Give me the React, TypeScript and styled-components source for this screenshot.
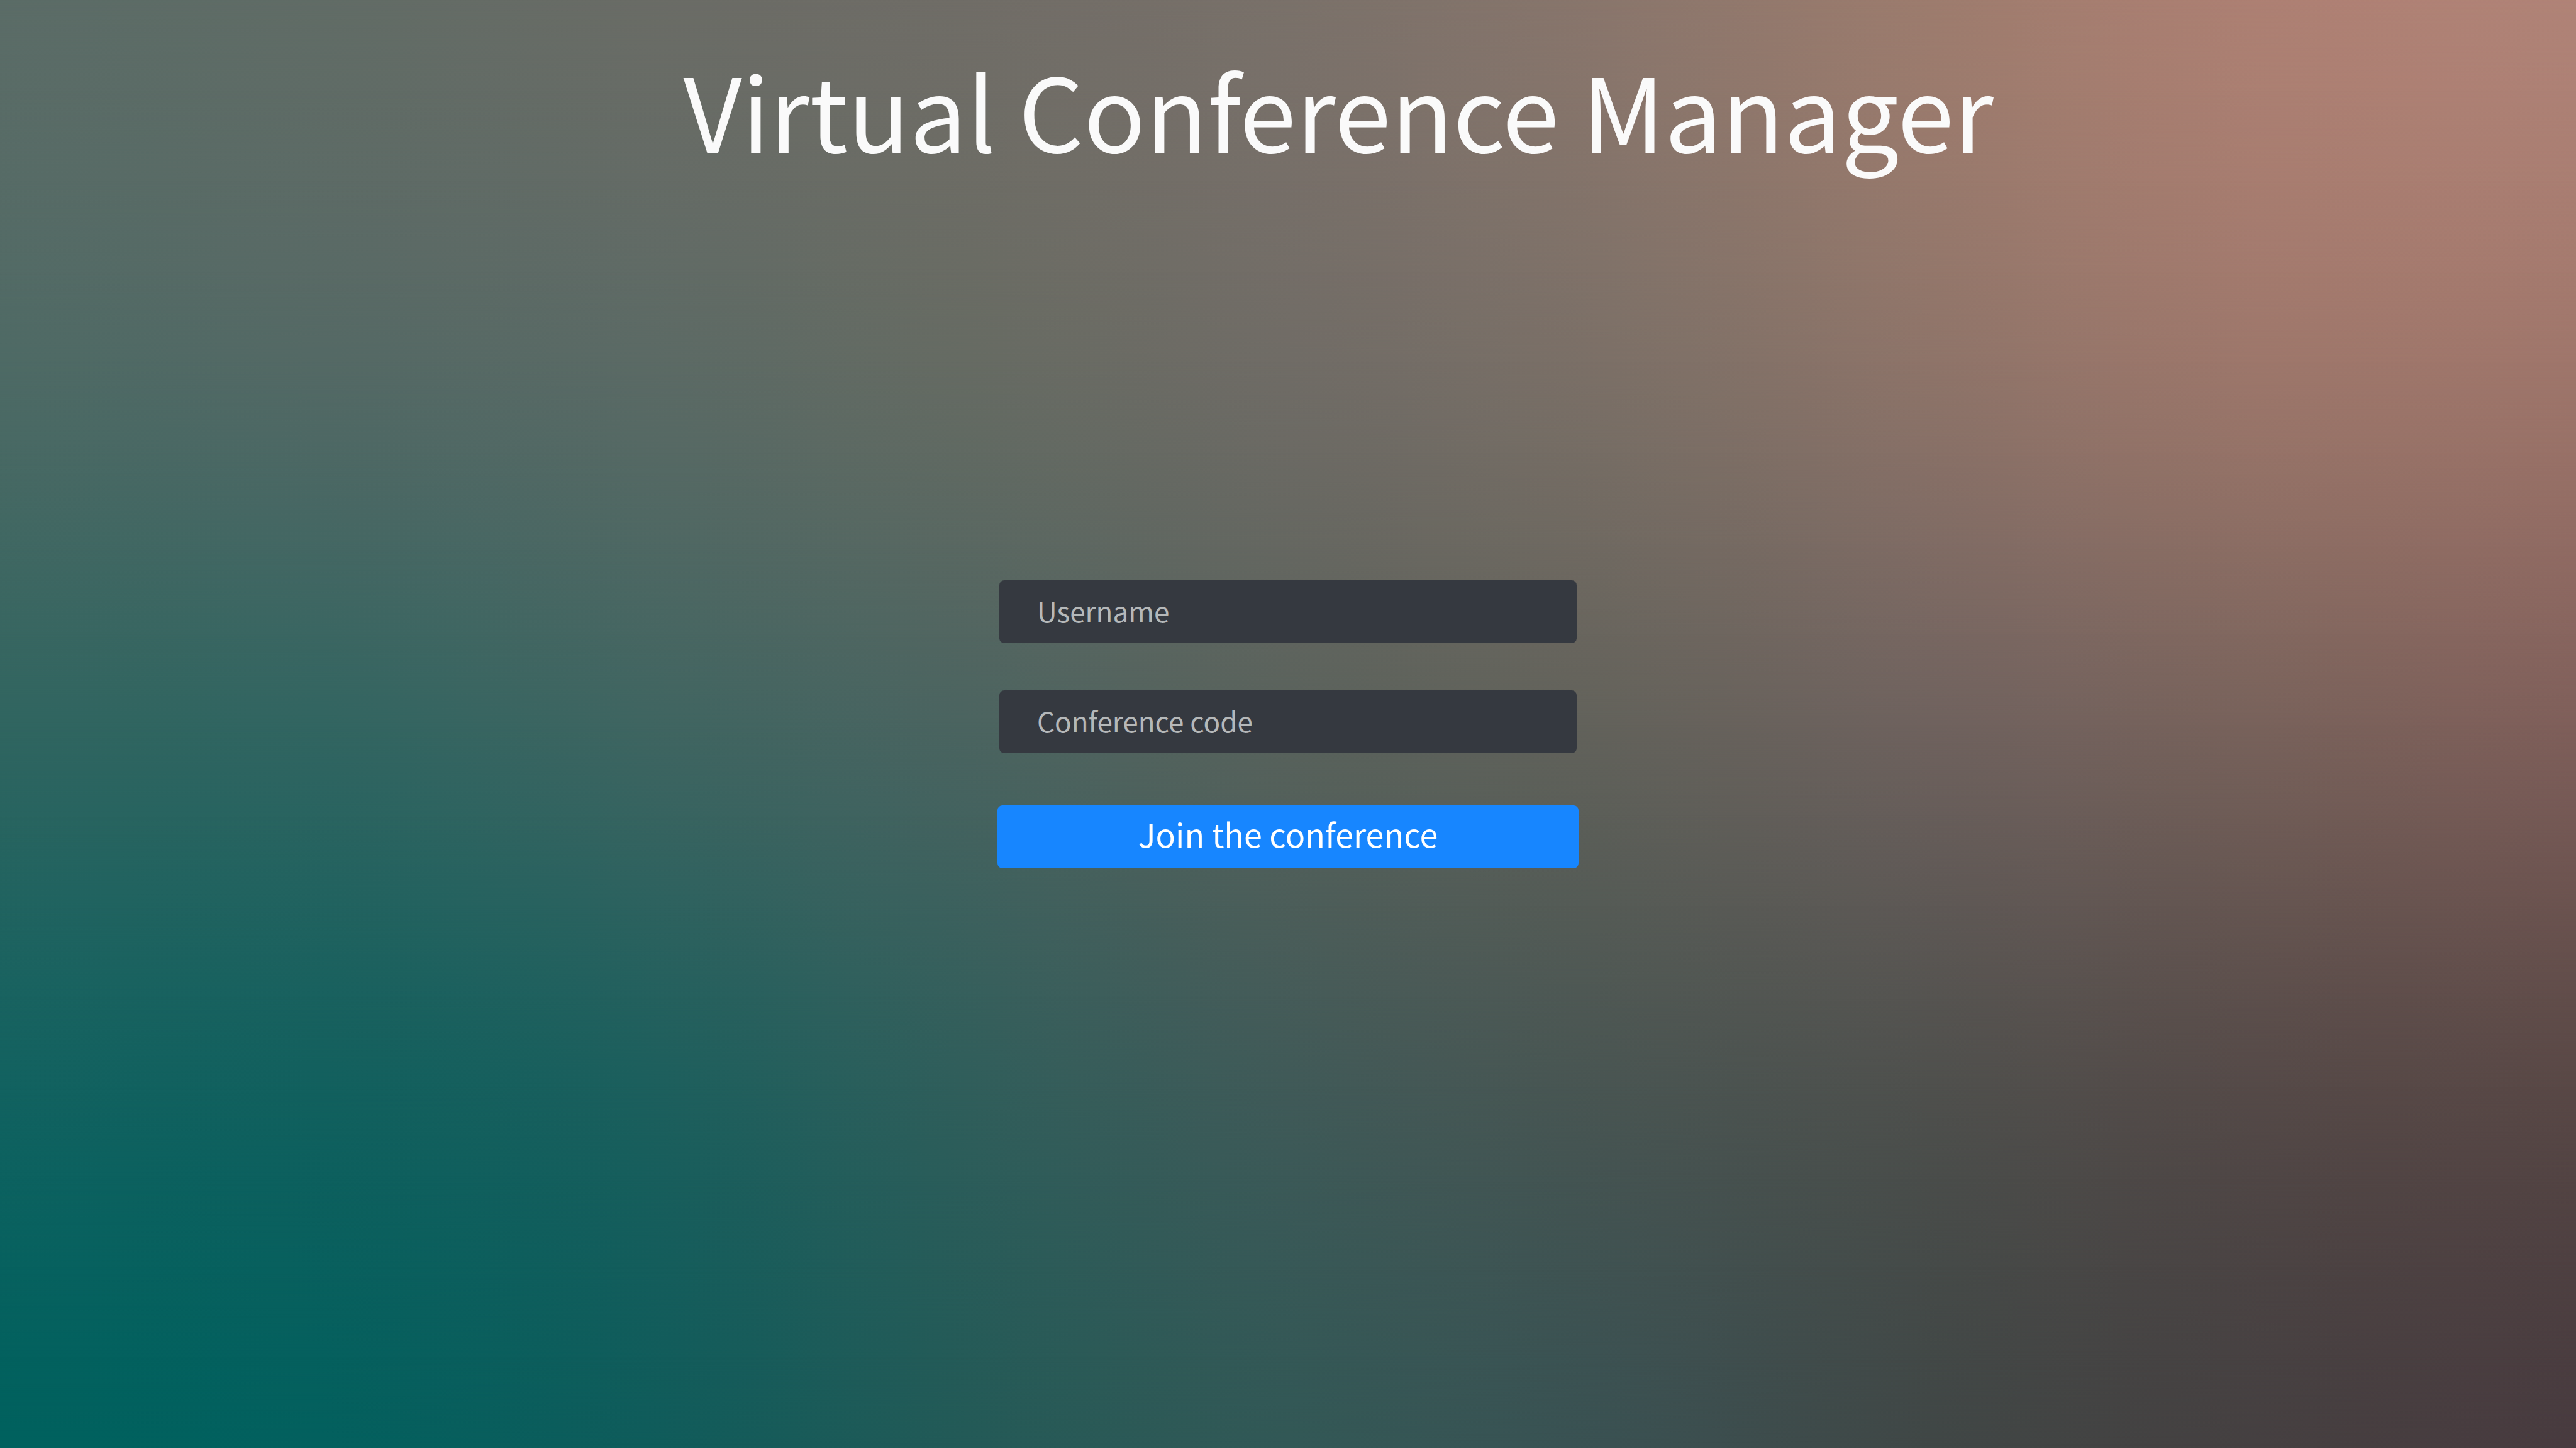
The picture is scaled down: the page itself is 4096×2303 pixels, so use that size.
import React from "react";
import styled, { createGlobalStyle } from "styled-components";

type Rgb = number[];

/* Colour mesh: five rows, top to bottom, of nine evenly spaced colours. */
const mesh = [
  "5b6c67 616c66 6a6c66 706d67 7a716a 8a766c 9d7c6e ad8073 b08377",
  "4e6a65 546965 5b6a65 666b63 706c66 7c7067 8e7469 9d776b 9f766b",
  "306560 326561 3f6561 4b6460 59625c 63625b 6f625e 78625b 7f5f5a",
  "126260 12605e 1c5f5d 305e5b 405a58 495552 4f504d 554a48 594846",
  "00615e 03605e 0f5c5b 235a57 325856 3a5152 404746 454041 483b3f",
].map((row) =>
  row.split(" ").map((hex) => [0, 2, 4].map((i) => parseInt(hex.slice(i, i + 2), 16)))
);

/* Catmull-Rom spline through a list of colours, `steps` samples per span. */
function smooth(points: Rgb[], steps: number): Rgb[] {
  const last = points.length - 1;
  const at = (i: number) => points[Math.max(0, Math.min(last, i))];
  const out: Rgb[] = [];
  for (let s = 0; s <= last * steps; s++) {
    const i = Math.min(last - 1, Math.floor(s / steps));
    const t = s / steps - i;
    out.push(
      [0, 1, 2].map((c) => {
        const [a, b, d, e] = [at(i - 1)[c], at(i)[c], at(i + 1)[c], at(i + 2)[c]];
        const v =
          0.5 *
          (2 * b + (d - a) * t + (2 * a - 5 * b + 4 * d - e) * t * t + (3 * b - a - 3 * d + e) * t * t * t);
        return Math.max(0, Math.min(255, v));
      })
    );
  }
  return out;
}

const wide = mesh.map((row) => smooth(row, 3));
const columns = wide[0].map((_, x) => smooth(wide.map((row) => row[x]), 4));
const bandCount = columns[0].length;
const bands = Array.from({ length: bandCount }, (_, y) => ({
  colors: columns.map((column) => `rgb(${column[y].map((v) => v.toFixed(1)).join(" ")})`).join(", "),
  from: (Math.max(0, y - 1) / (bandCount - 1)) * 100,
  to: (y / (bandCount - 1)) * 100,
}));

const GlobalStyle = createGlobalStyle`
  * { box-sizing: border-box; }
  body {
    margin: 0;
    background: #59625c;
    font-family: "Noto Sans CJK JP", "Noto Sans", "Open Sans", sans-serif;
  }
`;

const Page = styled.div`
  position: relative;
  isolation: isolate;
  display: flex;
  flex-direction: column;
  min-height: 100vh;
  overflow: hidden;
`;

const Backdrop = styled.div`
  position: absolute;
  inset: 0;
  z-index: -1;
`;

const Band = styled.div<{ $colors: string; $from: number; $to: number }>`
  position: absolute;
  inset: 0;
  background: linear-gradient(to right, ${(p) => p.$colors});
  mask-image: linear-gradient(to bottom, transparent ${(p) => p.$from}%, #000 ${(p) => p.$to}%);
`;

const Header = styled.header`
  padding: 73px 0 0 160px;
  text-align: center;
`;

const Title = styled.h1`
  margin: 0;
  color: #fafafa;
  font-size: 162px;
  font-weight: 400;
  line-height: 200px;
`;

const Main = styled.main`
  display: flex;
  justify-content: center;
  padding-top: 650px;
`;

const Form = styled.form`
  display: flex;
  flex-direction: column;
  gap: 83px;
  width: min(924px, 90vw);
`;

const Fields = styled.div`
  display: flex;
  flex-direction: column;
  gap: 75px;
  padding: 0 3px;
`;

const TextInput = styled.input`
  width: 100%;
  height: 100px;
  padding: 0 60px 5px;
  border: 0;
  border-radius: 8px;
  background: #353940;
  color: #fafafa;
  font-family: inherit;
  font-size: 44px;
  &::placeholder {
    color: #b5b8b9;
    opacity: 1;
  }
`;

const JoinButton = styled.button`
  height: 100px;
  padding: 0 0 12px;
  border: 0;
  border-radius: 8px;
  background: #1786ff;
  color: #fff;
  font-family: inherit;
  font-size: 52px;
  cursor: pointer;
`;

export default function App() {
  return (
    <Page>
      <GlobalStyle />
      <Backdrop aria-hidden="true">
        {bands.map((band, i) => (
          <Band key={i} $colors={band.colors} $from={i === 0 ? -1 : band.from} $to={band.to} />
        ))}
      </Backdrop>
      <Header>
        <Title>Virtual Conference Manager</Title>
      </Header>
      <Main>
        <Form onSubmit={(event) => event.preventDefault()}>
          <Fields>
            <TextInput type="text" name="username" aria-label="Username" placeholder="Username" />
            <TextInput type="text" name="code" aria-label="Conference code" placeholder="Conference code" />
          </Fields>
          <JoinButton type="submit">Join the conference</JoinButton>
        </Form>
      </Main>
    </Page>
  );
}
